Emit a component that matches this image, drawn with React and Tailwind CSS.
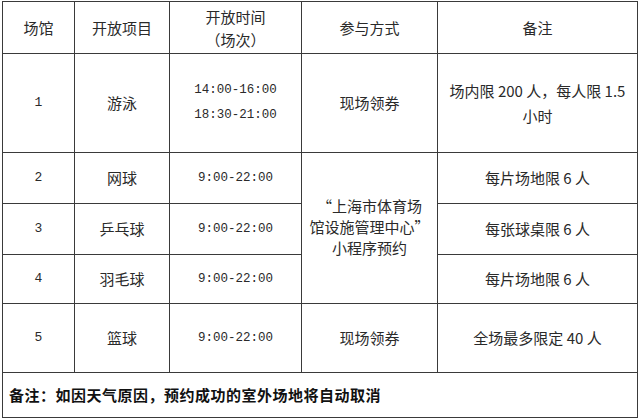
import React from 'react';

const cjk = { fontFamily: '"Noto Sans CJK SC", "Noto Sans", sans-serif' };
const mono = { fontFamily: '"Liberation Mono", "Noto Sans CJK SC", monospace' };

const rows = [
    { id: '2', sport: '网球', time: '9:00-22:00', note: '每片场地限 6 人', h: 'h-[51px]' },
    { id: '3', sport: '乒乓球', time: '9:00-22:00', note: '每张球桌限 6 人', h: 'h-[51px]' },
    { id: '4', sport: '羽毛球', time: '9:00-22:00', note: '每片场地限 6 人', h: 'h-[49px]' },
];

const cell = 'border border-[#3a3a3a] text-center align-middle p-0';

const App = () => {
    return (
        <div className="w-[640px] h-[420px] bg-white pt-[1px] pl-[2px] text-[#2a2a2a]" style={cjk}>
            <table className="table-fixed border-collapse w-[635px] text-[15px]">
                <colgroup>
                    <col className="w-[72px]" />
                    <col className="w-[95px]" />
                    <col className="w-[132px]" />
                    <col className="w-[136px]" />
                    <col className="w-[200px]" />
                </colgroup>
                <tbody>
                    {/* header */}
                    <tr className="h-[52px] leading-[23px]">
                        <td className={cell}>场馆</td>
                        <td className={cell}>开放项目</td>
                        <td className={cell}>开放时间<br />（场次）</td>
                        <td className={cell}>参与方式</td>
                        <td className={cell}>备注</td>
                    </tr>

                    <tr className="h-[99px]">
                        <td className={cell + ' text-[13px]'} style={mono}>1</td>
                        <td className={cell}>游泳</td>
                        <td className={cell + ' text-[12.5px] leading-[25px]'} style={mono}>
                            14:00-16:00<br />18:30-21:00
                        </td>
                        <td className={cell}>现场领券</td>
                        <td className={cell + ' leading-[25px]'}>
                            场内限 200 人，每人限 1.5<br />小时
                        </td>
                    </tr>

                    {rows.map((r, i) => (
                        <tr key={r.id} className={r.h}>
                            <td className={cell + ' text-[13px]'} style={mono}>{r.id}</td>
                            <td className={cell}>{r.sport}</td>
                            <td className={cell + ' text-[12.5px]'} style={mono}>{r.time}</td>
                            {i === 0 && (
                                <td rowSpan={3} className={cell + ' leading-[21px] pb-[4px]'}>
                                    “上海市体育场<br />馆设施管理中心”<br />小程序预约
                                </td>
                            )}
                            <td className={cell}>{r.note}</td>
                        </tr>
                    ))}

                    <tr className="h-[69px]">
                        <td className={cell + ' text-[13px]'} style={mono}>5</td>
                        <td className={cell}>篮球</td>
                        <td className={cell + ' text-[12.5px]'} style={mono}>9:00-22:00</td>
                        <td className={cell}>现场领券</td>
                        <td className={cell}>全场最多限定 40 人</td>
                    </tr>

                    <tr className="h-[45px]">
                        <td colSpan={5} className="border border-[#3a3a3a] text-left align-middle pl-[6px] font-bold tracking-[0.5px] text-[#111]">
                            备注：如因天气原因，预约成功的室外场地将自动取消
                        </td>
                    </tr>
                </tbody>
            </table>
        </div>
    );
};

export default App;
